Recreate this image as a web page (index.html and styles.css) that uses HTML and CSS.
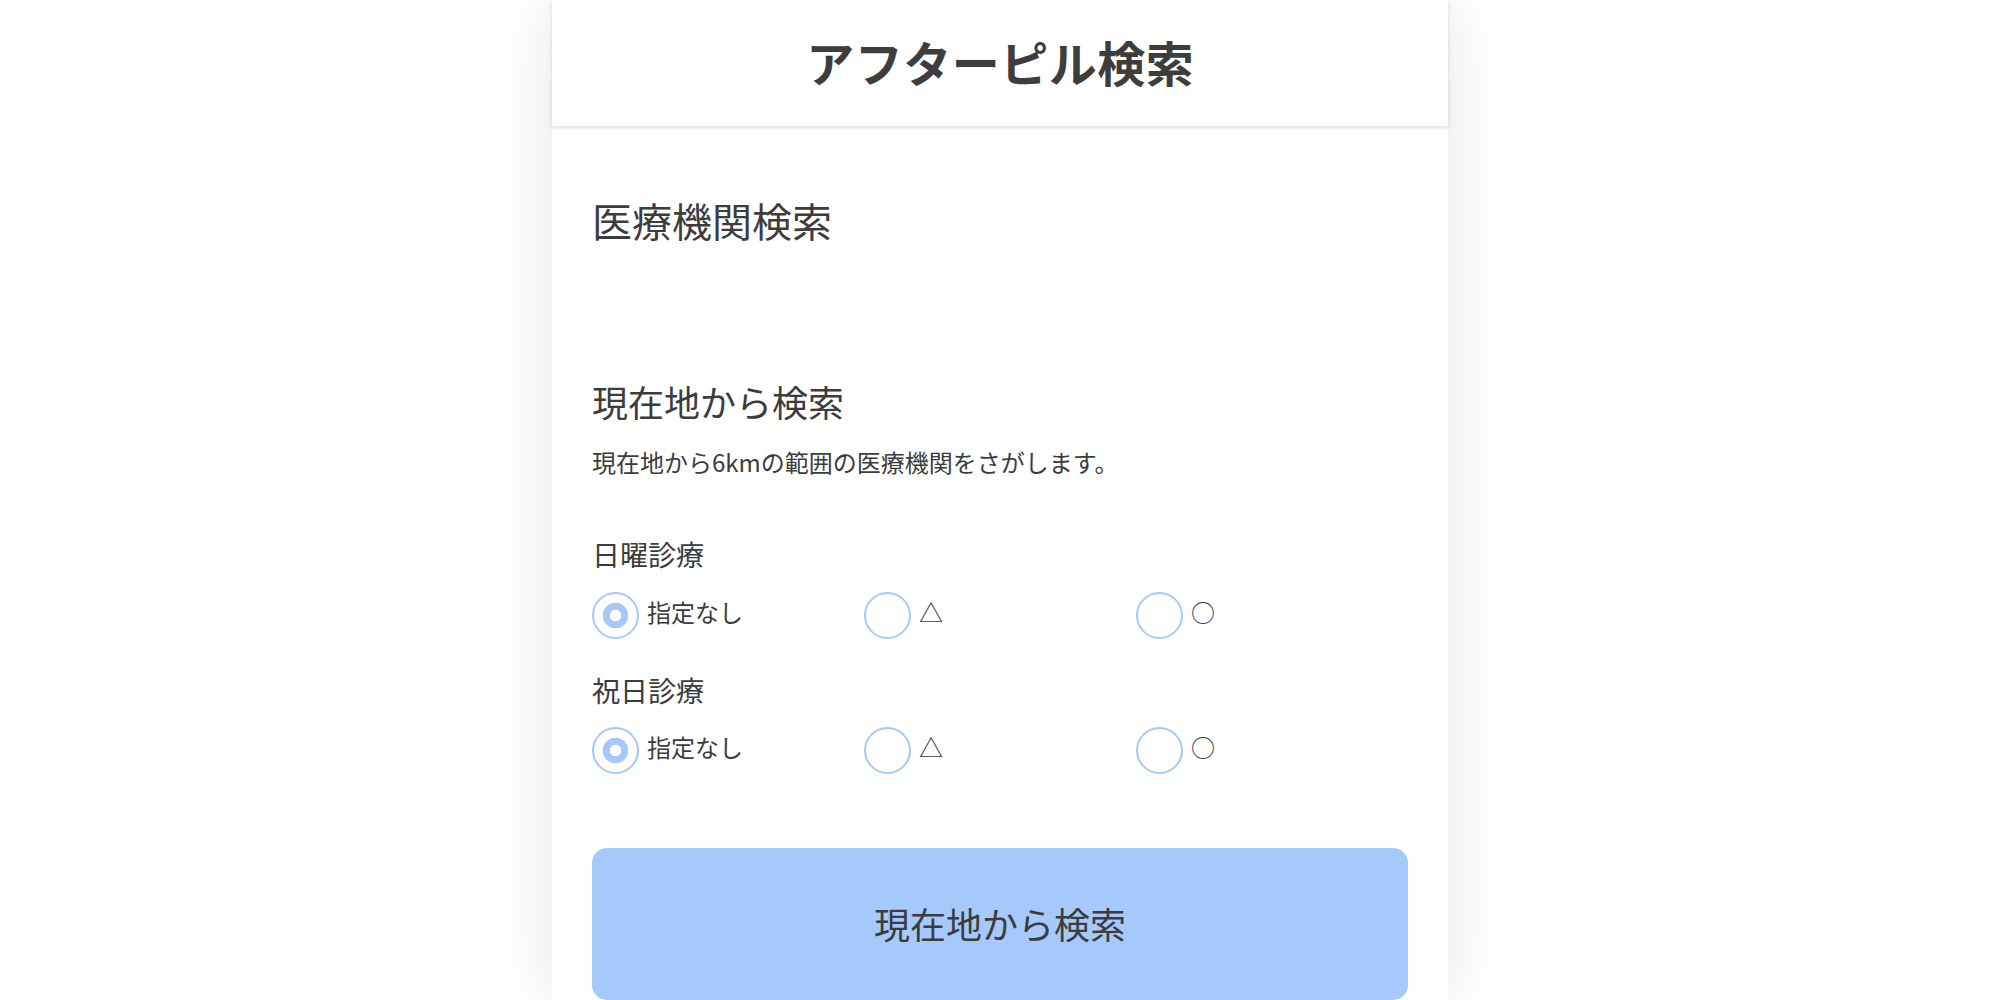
FILE: index.html
```html
<!DOCTYPE html>
<html lang="ja">
<head>
<meta charset="utf-8">
<title>アフターピル検索</title>
<link rel="stylesheet" href="styles.css">
</head>
<body>
<div class="card">
  <header class="header">
    <h1 class="title">アフターピル検索</h1>
  </header>
  <main class="content">
    <h2 class="h2">医療機関検索</h2>
    <h3 class="h3">現在地から検索</h3>
    <p class="desc">現在地から6kmの範囲の医療機関をさがします。</p>

    <div class="label label-first">日曜診療</div>
    <div class="options options-first">
      <label class="option"><span class="radio checked"></span><span class="opt-text">指定なし</span></label>
      <label class="option"><span class="radio"></span><span class="opt-text">△</span></label>
      <label class="option"><span class="radio"></span><span class="opt-text">○</span></label>
    </div>

    <div class="label label-second">祝日診療</div>
    <div class="options options-second">
      <label class="option"><span class="radio checked"></span><span class="opt-text">指定なし</span></label>
      <label class="option"><span class="radio"></span><span class="opt-text">△</span></label>
      <label class="option"><span class="radio"></span><span class="opt-text">○</span></label>
    </div>

    <button class="search-btn">現在地から検索</button>
  </main>
</div>
</body>
</html>
```
FILE: styles.css
```css
html, body {
  margin: 0;
  padding: 0;
  background: #ffffff;
}
body {
  font-family: "Noto Sans CJK JP", "Noto Sans", sans-serif;
  color: #3c3c3c;
  overflow: hidden;
}
.card {
  width: 896px;
  margin: 0 auto;
  min-height: 100vh;
  background: #fff;
  box-shadow: 0 0 70px rgba(0, 0, 0, 0.10);
}
.header {
  height: 126px;
  display: flex;
  align-items: center;
  justify-content: center;
  box-shadow: 0 2px 4px rgba(0, 0, 0, 0.13);
  position: relative;
  z-index: 1;
}
.title {
  margin: 0 0 4px;
  font-size: 48px;
  font-weight: 700;
  letter-spacing: 0.5px;
  padding-left: 0.5px;
  line-height: 60px;
  color: #3d3d3d;
}
.content {
  padding: 0 40px;
}
.h2 {
  margin: 64px 0 0;
  font-size: 40px;
  font-weight: 400;
  line-height: 60px;
}
.h3 {
  margin: 126px 0 0;
  font-size: 36px;
  font-weight: 400;
  line-height: 50px;
}
.desc {
  margin: 18px 0 0;
  font-size: 24px;
  line-height: 36px;
}
.label {
  font-size: 28px;
  line-height: 40px;
}
.label-first { margin-top: 54px; }
.label-second { margin-top: 31px; }
.options {
  display: grid;
  grid-template-columns: repeat(3, 1fr);
  height: 48px;
}
.options-first { margin-top: 17px; }
.options-second { margin-top: 16px; }
.option {
  display: flex;
  align-items: center;
  gap: 8px;
}
.radio {
  width: 47px;
  height: 47px;
  box-sizing: border-box;
  border: 2px solid #a6c8fb;
  border-radius: 50%;
  background: #fff;
  flex: none;
}
.radio.checked {
  background: radial-gradient(circle, #ffffff 0 5.5px, #a6c8fb 6px 12.5px, #ffffff 13px);
}
.opt-text {
  font-size: 24px;
  line-height: 30px;
  margin-top: -7px;
}
.search-btn {
  display: flex;
  align-items: center;
  justify-content: center;
  width: 100%;
  height: 152px;
  margin-top: 74px;
  border: none;
  border-radius: 15px;
  background: #a6c9fc;
  color: #3c3c3c;
  font-family: "Noto Sans CJK JP", "Noto Sans", sans-serif;
  font-size: 36px;
  padding: 0 0 3px;
}
```
